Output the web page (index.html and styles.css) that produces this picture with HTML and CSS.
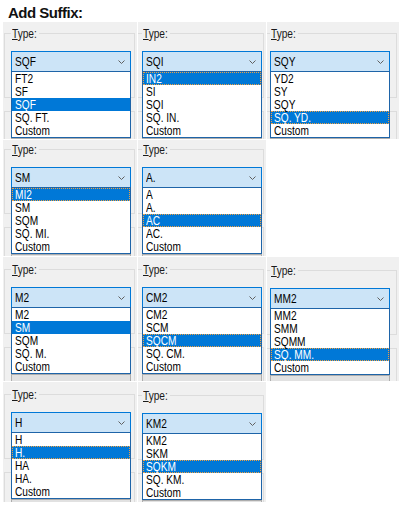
FILE: index.html
```html
<!DOCTYPE html>
<html lang="en">

<head>
    <meta charset="UTF-8">
    <meta name="viewport" content="width=device-width, initial-scale=1.0">
    <title>Add Suffix</title>
    <link rel="stylesheet" href="styles.css">
</head>

<body>
    <h1 class="title">Add Suffix:</h1>

    <div class="rows">
        <!-- row 1 -->
        <div class="row r1">
            <div class="tile c1">
                <fieldset class="group">
                    <legend><span class="t"><u>T</u>ype:</span></legend>
                    <div class="combo">
                        <span class="t">SQF</span>
                        <svg class="chev" width="7" height="4" viewBox="0 0 7 4"><polyline points="0.5,0.5 3.5,3.5 6.5,0.5"/></svg>
                        <ul class="list">
                            <li><span class="t">FT2</span></li>
                            <li><span class="t">SF</span></li>
                            <li class="sel"><span class="t">SQF</span></li>
                            <li><span class="t">SQ. FT.</span></li>
                            <li><span class="t">Custom</span></li>
                        </ul>
                    </div>
                </fieldset>
                <div class="group2"><div class="combo idle"><span></span><svg class="chev" width="7" height="4" viewBox="0 0 7 4"><polyline points="0.5,0.5 3.5,3.5 6.5,0.5"/></svg></div></div>
            </div>
            <div class="tile c2">
                <fieldset class="group">
                    <legend><span class="t"><u>T</u>ype:</span></legend>
                    <div class="combo">
                        <span class="t">SQI</span>
                        <svg class="chev" width="7" height="4" viewBox="0 0 7 4"><polyline points="0.5,0.5 3.5,3.5 6.5,0.5"/></svg>
                        <ul class="list">
                            <li class="sel focus"><span class="t">IN2</span></li>
                            <li><span class="t">SI</span></li>
                            <li><span class="t">SQI</span></li>
                            <li><span class="t">SQ. IN.</span></li>
                            <li><span class="t">Custom</span></li>
                        </ul>
                    </div>
                </fieldset>
                <div class="group2"><div class="combo idle"><span></span><svg class="chev" width="7" height="4" viewBox="0 0 7 4"><polyline points="0.5,0.5 3.5,3.5 6.5,0.5"/></svg></div></div>
            </div>
            <div class="tile c3">
                <fieldset class="group">
                    <legend><span class="t"><u>T</u>ype:</span></legend>
                    <div class="combo">
                        <span class="t">SQY</span>
                        <svg class="chev" width="7" height="4" viewBox="0 0 7 4"><polyline points="0.5,0.5 3.5,3.5 6.5,0.5"/></svg>
                        <ul class="list">
                            <li><span class="t">YD2</span></li>
                            <li><span class="t">SY</span></li>
                            <li><span class="t">SQY</span></li>
                            <li class="sel focus"><span class="t">SQ. YD.</span></li>
                            <li><span class="t">Custom</span></li>
                        </ul>
                    </div>
                </fieldset>
                <div class="group2"><div class="combo idle"><span></span><svg class="chev" width="7" height="4" viewBox="0 0 7 4"><polyline points="0.5,0.5 3.5,3.5 6.5,0.5"/></svg></div></div>
            </div>
        </div>

        <!-- row 2 -->
        <div class="row r2">
            <div class="tile c1">
                <fieldset class="group">
                    <legend><span class="t"><u>T</u>ype:</span></legend>
                    <div class="combo">
                        <span class="t">SM</span>
                        <svg class="chev" width="7" height="4" viewBox="0 0 7 4"><polyline points="0.5,0.5 3.5,3.5 6.5,0.5"/></svg>
                        <ul class="list">
                            <li class="sel focus"><span class="t">MI2</span></li>
                            <li><span class="t">SM</span></li>
                            <li><span class="t">SQM</span></li>
                            <li><span class="t">SQ. MI.</span></li>
                            <li><span class="t">Custom</span></li>
                        </ul>
                    </div>
                </fieldset>
                <div class="group2"><div class="combo idle"><span></span><svg class="chev" width="7" height="4" viewBox="0 0 7 4"><polyline points="0.5,0.5 3.5,3.5 6.5,0.5"/></svg></div></div>
            </div>
            <div class="tile c2">
                <fieldset class="group">
                    <legend><span class="t"><u>T</u>ype:</span></legend>
                    <div class="combo">
                        <span class="t">A.</span>
                        <svg class="chev" width="7" height="4" viewBox="0 0 7 4"><polyline points="0.5,0.5 3.5,3.5 6.5,0.5"/></svg>
                        <ul class="list">
                            <li><span class="t">A</span></li>
                            <li><span class="t">A.</span></li>
                            <li class="sel focus"><span class="t">AC</span></li>
                            <li><span class="t">AC.</span></li>
                            <li><span class="t">Custom</span></li>
                        </ul>
                    </div>
                </fieldset>
                <div class="group2"><div class="combo idle"><span></span><svg class="chev" width="7" height="4" viewBox="0 0 7 4"><polyline points="0.5,0.5 3.5,3.5 6.5,0.5"/></svg></div></div>
            </div>
        </div>

        <!-- row 3 -->
        <div class="row r3">
            <div class="tile c1">
                <fieldset class="group">
                    <legend><span class="t"><u>T</u>ype:</span></legend>
                    <div class="combo">
                        <span class="t">M2</span>
                        <svg class="chev" width="7" height="4" viewBox="0 0 7 4"><polyline points="0.5,0.5 3.5,3.5 6.5,0.5"/></svg>
                        <ul class="list">
                            <li><span class="t">M2</span></li>
                            <li class="sel"><span class="t">SM</span></li>
                            <li><span class="t">SQM</span></li>
                            <li><span class="t">SQ. M.</span></li>
                            <li><span class="t">Custom</span></li>
                        </ul>
                    </div>
                </fieldset>
                <div class="group2"><div class="combo idle"><span></span><svg class="chev" width="7" height="4" viewBox="0 0 7 4"><polyline points="0.5,0.5 3.5,3.5 6.5,0.5"/></svg></div></div>
            </div>
            <div class="tile c2">
                <fieldset class="group">
                    <legend><span class="t"><u>T</u>ype:</span></legend>
                    <div class="combo">
                        <span class="t">CM2</span>
                        <svg class="chev" width="7" height="4" viewBox="0 0 7 4"><polyline points="0.5,0.5 3.5,3.5 6.5,0.5"/></svg>
                        <ul class="list">
                            <li><span class="t">CM2</span></li>
                            <li><span class="t">SCM</span></li>
                            <li class="sel focus"><span class="t">SQCM</span></li>
                            <li><span class="t">SQ. CM.</span></li>
                            <li><span class="t">Custom</span></li>
                        </ul>
                    </div>
                </fieldset>
                <div class="group2"><div class="combo idle"><span></span><svg class="chev" width="7" height="4" viewBox="0 0 7 4"><polyline points="0.5,0.5 3.5,3.5 6.5,0.5"/></svg></div></div>
            </div>
            <div class="tile c3 low">
                <fieldset class="group">
                    <legend><span class="t"><u>T</u>ype:</span></legend>
                    <div class="combo">
                        <span class="t">MM2</span>
                        <svg class="chev" width="7" height="4" viewBox="0 0 7 4"><polyline points="0.5,0.5 3.5,3.5 6.5,0.5"/></svg>
                        <ul class="list">
                            <li><span class="t">MM2</span></li>
                            <li><span class="t">SMM</span></li>
                            <li><span class="t">SQMM</span></li>
                            <li class="sel focus"><span class="t">SQ. MM.</span></li>
                            <li><span class="t">Custom</span></li>
                        </ul>
                    </div>
                </fieldset>
                <div class="group2"><div class="combo idle"><span></span><svg class="chev" width="7" height="4" viewBox="0 0 7 4"><polyline points="0.5,0.5 3.5,3.5 6.5,0.5"/></svg></div></div>
            </div>
        </div>

        <!-- row 4 -->
        <div class="row r4">
            <div class="tile c1">
                <fieldset class="group">
                    <legend><span class="t"><u>T</u>ype:</span></legend>
                    <div class="combo">
                        <span class="t">H</span>
                        <svg class="chev" width="7" height="4" viewBox="0 0 7 4"><polyline points="0.5,0.5 3.5,3.5 6.5,0.5"/></svg>
                        <ul class="list">
                            <li><span class="t">H</span></li>
                            <li class="sel focus"><span class="t">H.</span></li>
                            <li><span class="t">HA</span></li>
                            <li><span class="t">HA.</span></li>
                            <li><span class="t">Custom</span></li>
                        </ul>
                    </div>
                </fieldset>
                <div class="group2"><div class="combo idle"><span></span><svg class="chev" width="7" height="4" viewBox="0 0 7 4"><polyline points="0.5,0.5 3.5,3.5 6.5,0.5"/></svg></div></div>
            </div>
            <div class="tile c2 low">
                <fieldset class="group">
                    <legend><span class="t"><u>T</u>ype:</span></legend>
                    <div class="combo">
                        <span class="t">KM2</span>
                        <svg class="chev" width="7" height="4" viewBox="0 0 7 4"><polyline points="0.5,0.5 3.5,3.5 6.5,0.5"/></svg>
                        <ul class="list">
                            <li><span class="t">KM2</span></li>
                            <li><span class="t">SKM</span></li>
                            <li class="sel focus"><span class="t">SQKM</span></li>
                            <li><span class="t">SQ. KM.</span></li>
                            <li><span class="t">Custom</span></li>
                        </ul>
                    </div>
                </fieldset>
                <div class="group2"><div class="combo idle"><span></span><svg class="chev" width="7" height="4" viewBox="0 0 7 4"><polyline points="0.5,0.5 3.5,3.5 6.5,0.5"/></svg></div></div>
            </div>
        </div>
    </div>
</body>

</html>
```

FILE: styles.css
```css
body {
    margin: 0;
    background: #ffffff;
    font-family: "Liberation Sans", Arial, sans-serif;
    font-size: 13px;
    color: #000000;
}

.title {
    margin: 0;
    height: 17px;
    padding: 5px 8px 0;
    font: bold 15px/16px "Liberation Sans", Arial, sans-serif;
    letter-spacing: -0.5px;
    color: #111111;
}

/* the dialog font is tall and narrow */
.t {
    display: inline-block;
    transform: scaleX(0.78);
    transform-origin: 0 50%;
    white-space: nowrap;
}

.rows {
    padding-left: 3px;
}

.row {
    display: grid;
    grid-template-columns: 134px 128px 132px;
    column-gap: 1px;
    margin-bottom: 1px;
}

.r1 { height: 117px; }
.r2 { height: 116px; }
.r3 { height: 124px; }
.r4 { height: 120px; }

.tile {
    background: #f0f0f0;
    overflow: hidden;
    box-sizing: border-box;
}

.r1 .tile { padding-top: 2px; }
.r2 .tile { padding-top: 0; }
.r3 .tile { padding-top: 3px; }
.r4 .tile { padding-top: 3px; }

/* a few crops sit one pixel lower */
.r3 .tile.low,
.r4 .tile.low { padding-top: 4px; }

/* group boxes */
.group {
    margin: 3px 2px 0 1px;
    padding: 0 6px 25px;
    border: 1px solid #dcdcdc;
    min-width: 0;
}

.group legend {
    width: 26px;
    padding: 0 1px;
    line-height: 13px;
    color: #1a1a1a;
}

.group2 {
    margin: 13px 2px 0 1px;
    padding: 26px 6px 0;
    border: 1px solid #dcdcdc;
    border-bottom: none;
    height: 40px;
}

.c2 .group,
.c2 .group2 {
    margin-left: -3px;
}

.c3 .group,
.c3 .group2 {
    margin-left: -4px;
}

/* combo box */
.combo {
    position: relative;
    display: flex;
    justify-content: space-between;
    align-items: center;
    box-sizing: border-box;
    width: 120px;
    height: 21px;
    margin-top: 11px;
    padding: 0 5px 0 3px;
    border: 1px solid #0078d7;
    background: #cce4f7;
    line-height: 19px;
}

.combo.idle {
    margin-top: 0;
    border-color: #adadad;
    background: #e1e1e1;
}

.chev {
    flex: none;
}

.chev polyline {
    fill: none;
    stroke: #606060;
    stroke-width: 1;
}

/* dropped list */
.list {
    position: absolute;
    top: 19px;
    left: -1px;
    z-index: 2;
    box-sizing: border-box;
    width: 120px;
    margin: 0;
    padding: 0;
    list-style: none;
    border: 1px solid #1e64a8;
    background: #ffffff;
}

.list li {
    box-sizing: border-box;
    height: 13px;
    padding: 1px 0 0 3px;
    line-height: 12px;
    white-space: nowrap;
}

.list li.sel {
    background: #0078d7;
    color: #ffffff;
}

.list li.focus {
    outline: 1px dotted #f0a040;
    outline-offset: -1px;
}
```
